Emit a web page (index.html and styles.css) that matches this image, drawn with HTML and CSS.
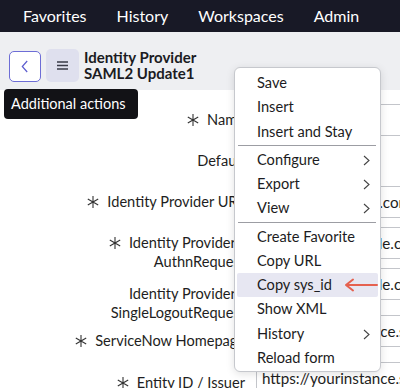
FILE: index.html
```html
<!DOCTYPE html>
<html lang="en">
<head>
    <meta charset="UTF-8">
    <meta name="viewport" content="width=device-width, initial-scale=1.0">
    <title>Identity Provider - SAML2 Update1</title>
    <link rel="stylesheet" href="styles.css">
</head>
<body>
    <nav class="topnav">
        <span>Favorites</span>
        <span>History</span>
        <span>Workspaces</span>
        <span>Admin</span>
    </nav>

    <header class="form-header">
        <button class="btn-back" aria-label="Back">
            <svg width="8" height="13" viewBox="0 0 8 13"><path d="M6.2 1 L1.3 6.5 L6.2 12" fill="none" stroke="#5d5dcf" stroke-width="1.2"/></svg>
        </button>
        <button class="btn-actions" aria-label="Additional actions">
            <svg width="11" height="9" viewBox="0 0 11 9"><path d="M0 1h11M0 4.5h11M0 8h11" stroke="#3a3b48" stroke-width="1.3"/></svg>
        </button>
        <div class="title">Identity Provider<br>SAML2 Update1</div>
    </header>

    <div class="tooltip">Additional actions</div>

    <main class="form">
        <div class="row">
            <div class="label"><svg class="req" viewBox="0 0 12 12"><path d="M6 0v12M0.8 3l10.4 6M0.8 9l10.4-6" stroke="#333" stroke-width="1.1"/></svg>Name</div>
            <div class="field">SAML2 Update1</div>
        </div>
        <div class="row">
            <div class="label">Default</div>
            <div class="check"></div>
        </div>
        <div class="row">
            <div class="label"><svg class="req" viewBox="0 0 12 12"><path d="M6 0v12M0.8 3l10.4 6M0.8 9l10.4-6" stroke="#333" stroke-width="1.1"/></svg>Identity Provider URL</div>
            <div class="field">https://idp.yourco.com/sso/saml</div>
        </div>
        <div class="row">
            <div class="label"><svg class="req" viewBox="0 0 12 12"><path d="M6 0v12M0.8 3l10.4 6M0.8 9l10.4-6" stroke="#333" stroke-width="1.1"/></svg>Identity Provider's AuthnRequest</div>
            <div class="field">https://sso.example.com/saml2</div>
        </div>
        <div class="row low">
            <div class="label">Identity Provider's SingleLogoutRequest</div>
            <div class="field">https://sso.example.com/logout</div>
        </div>
        <div class="row low">
            <div class="label"><svg class="req" viewBox="0 0 12 12"><path d="M6 0v12M0.8 3l10.4 6M0.8 9l10.4-6" stroke="#333" stroke-width="1.1"/></svg>ServiceNow Homepage</div>
            <div class="field">https://yourinstance.service-now.com/navpage.do</div>
        </div>
        <div class="row last">
            <div class="label"><svg class="req" viewBox="0 0 12 12"><path d="M6 0v12M0.8 3l10.4 6M0.8 9l10.4-6" stroke="#333" stroke-width="1.1"/></svg>Entity ID / Issuer</div>
            <div class="field">https://yourinstance.service-now.com</div>
        </div>
    </main>

    <div class="context-menu">
        <div class="item">Save</div>
        <div class="item">Insert</div>
        <div class="item">Insert and Stay</div>
        <div class="sep"></div>
        <div class="item sub">Configure<svg viewBox="0 0 7 11"><path d="M1 1l5 4.5-5 4.5" fill="none" stroke="#444" stroke-width="1.1"/></svg></div>
        <div class="item sub">Export<svg viewBox="0 0 7 11"><path d="M1 1l5 4.5-5 4.5" fill="none" stroke="#444" stroke-width="1.1"/></svg></div>
        <div class="item sub">View<svg viewBox="0 0 7 11"><path d="M1 1l5 4.5-5 4.5" fill="none" stroke="#444" stroke-width="1.1"/></svg></div>
        <div class="sep"></div>
        <div class="item">Create Favorite</div>
        <div class="item">Copy URL</div>
        <div class="item active">Copy sys_id
            <svg class="pointer" width="34" height="14" viewBox="0 0 34 14"><path d="M2 7h31M9 1.5L2 7l7 5.5" fill="none" stroke="#e5614f" stroke-width="2" stroke-linecap="round" stroke-linejoin="round"/></svg>
        </div>
        <div class="item">Show XML</div>
        <div class="item sub">History<svg viewBox="0 0 7 11"><path d="M1 1l5 4.5-5 4.5" fill="none" stroke="#444" stroke-width="1.1"/></svg></div>
        <div class="item">Reload form</div>
    </div>
</body>
</html>
```

FILE: styles.css
```css
html, body {
    margin: 0;
    padding: 0;
    overflow: hidden;
}
body {
    font-family: Lato, "Noto Sans", sans-serif;
    color: #1e1e22;
    background: white;
    position: relative;
    width: 400px;
    height: 388px;
}
.topnav {
    height: 32px;
    background: #181926;
    color: white;
    display: flex;
    align-items: center;
    gap: 30px;
    padding-left: 23px;
    font-size: 16px;
    padding-bottom: 2px;
    box-sizing: border-box;
}
.form-header {
    background: #eeeff2;
    height: 58px;
    box-sizing: border-box;
    padding: 17px 0 0 9px;
    display: flex;
    align-items: flex-start;
    gap: 5px;
}
.form-header button {
    width: 33px;
    height: 33px;
    border-radius: 5px;
    padding: 0;
    display: flex;
    align-items: center;
    justify-content: center;
}
.btn-back {
    background: white;
    border: 1.5px solid #6d6dd6;
    margin-top: 2px;
    height: 31px !important;
    width: 32px !important;
}
.btn-actions {
    background: #dfe0ee;
    border: none;
}
.title {
    font-weight: bold;
    font-size: 15px;
    line-height: 16px;
    color: #1b1b22;
}
.tooltip {
    position: absolute;
    left: 4px;
    top: 89px;
    width: 134px;
    height: 30px;
    box-sizing: border-box;
    padding-left: 7px;
    background: #121216;
    color: white;
    border-radius: 4px;
    font-size: 14.5px;
    line-height: 30px;
}
.form {
    padding-top: 14px;
    padding-left: 65px;
}
.row {
    display: flex;
    align-items: flex-start;
    height: 41px;
}
.row.low {
    height: 47px;
}
.label {
    width: 180px;
    flex: none;
    text-align: right;
    font-size: 14.6px;
    line-height: 19px;
    padding-top: 6px;
}
.row.low .label {
    padding-top: 16px;
}
.row.last .label {
    padding-top: 11px;
}
.req {
    width: 12px;
    height: 12px;
    margin-right: 8px;
    vertical-align: -1px;
}
.field {
    flex: none;
    margin-left: 11px;
    width: 320px;
    height: 32px;
    box-sizing: border-box;
    border: 1px solid #c3c5ca;
    border-radius: 4px;
    padding: 0 5px;
    font-size: 15.2px;
    line-height: 30px;
    white-space: nowrap;
    overflow: hidden;
}
.check {
    margin: 7px 0 0 11px;
    width: 18px;
    height: 18px;
    border: 1px solid #8a8c94;
    border-radius: 3px;
}
.context-menu {
    position: absolute;
    left: 234px;
    top: 67px;
    width: 147px;
    box-sizing: border-box;
    background: white;
    border: 1px solid #c6c8cd;
    border-radius: 6px;
    box-shadow: 0 2px 8px rgba(0, 0, 0, 0.12);
    padding: 3px 0 1px;
    font-size: 14.6px;
}
.item {
    position: relative;
    height: 24.25px;
    line-height: 24.25px;
    padding-left: 22px;
    color: #1c1c22;
    white-space: nowrap;
}
.item.sub svg {
    position: absolute;
    right: 10px;
    top: 7px;
    width: 7px;
    height: 11px;
}
.item.active {
    background: #e7e7f2;
    margin: 0 2px;
    padding-left: 20px;
    border-radius: 2px;
}
.pointer {
    position: absolute;
    left: 107px;
    top: 5px;
}
.sep {
    height: 1px;
    margin: 1.5px 4px 1.5px 3px;
    background: #9c9da3;
}
```
